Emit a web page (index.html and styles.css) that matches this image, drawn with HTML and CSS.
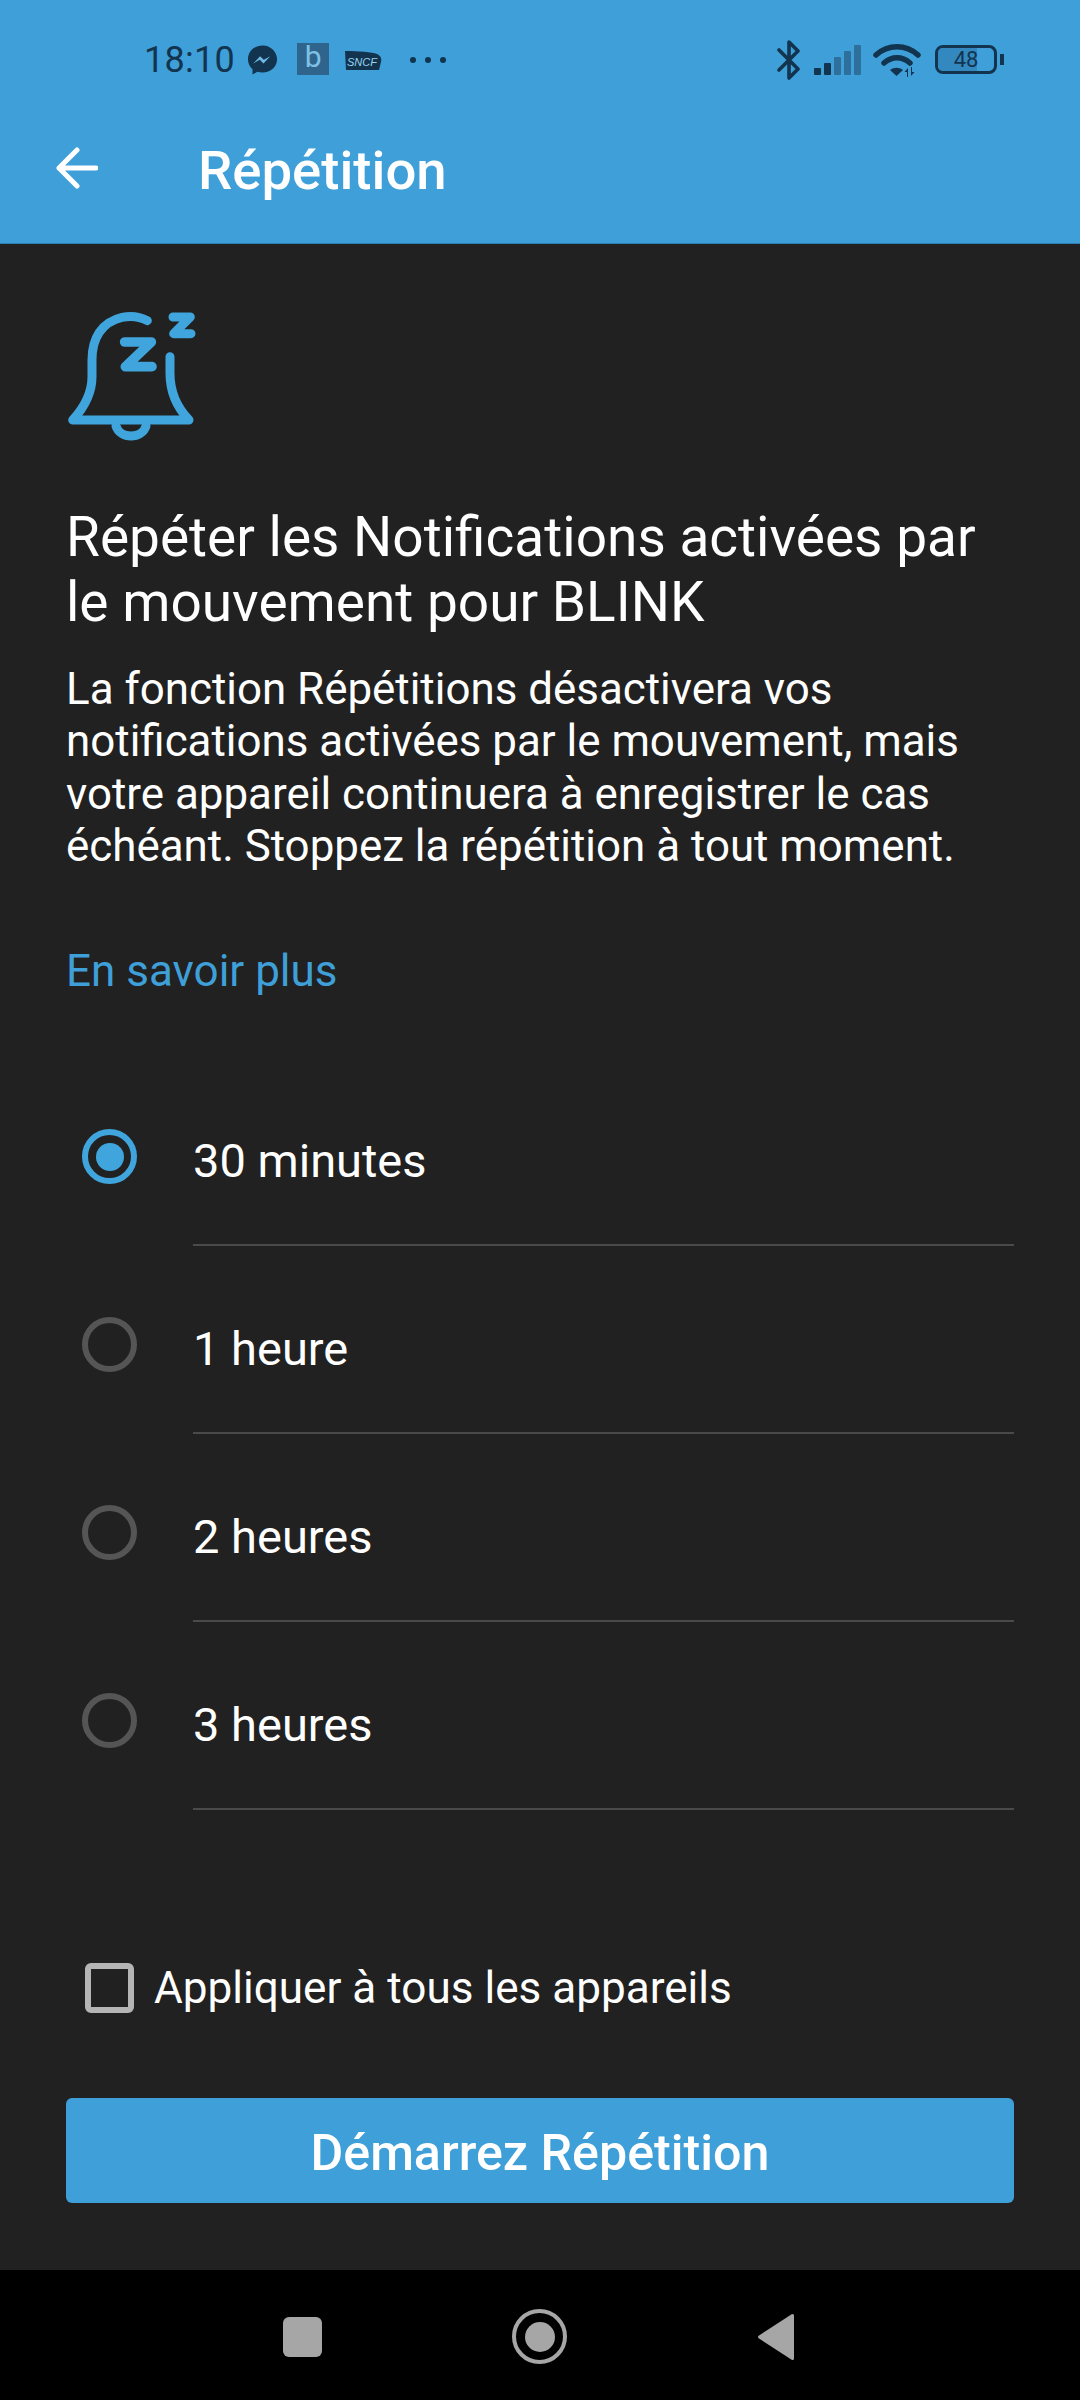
FILE: index.html
```html
<!DOCTYPE html>
<html lang="fr">
<head>
<meta charset="utf-8">
<title>Répétition</title>
<link rel="stylesheet" href="styles.css">
</head>
<body>
<div class="screen">
  <header class="header">
    <div class="status">
      <div class="status-left">
        <span class="time">18:10</span>
        <svg class="ic-msg" viewBox="0 0 32 32"><path class="dark" d="M16 1C7.500 1 1 7.200 1 15.200c0 4.200 1.800 7.800 4.700 10.300V31l5-2.800c1.600.5 3.400.7 5.300.7 8.500 0 15-6.100 15-13.700S24.500 1 16 1z"/><path class="pale" d="M6.500 19.500l7-7.500 3.800 3.700 6.700-3.700-7 7.500-3.800-3.700z"/></svg>
        <span class="ic-b">b</span>
        <svg class="ic-sncf" viewBox="0 0 38 21"><path class="dark" d="M1 1c14 0 27 1 32 3 4 2 5 5 4 8l-2 8H2z"/><text x="3" y="16" class="sncf-t">SNCF</text></svg>
        <span class="dots"><i></i><i></i><i></i></span>
      </div>
      <div class="status-right">
        <svg class="ic-bt" viewBox="0 0 26 40"><path d="M3 10l19 19-9 9V2l9 9L3 30" fill="none" stroke="#12344f" stroke-width="3.600" stroke-linecap="round" stroke-linejoin="round"/></svg>
        <span class="signal"><i class="on s1"></i><i class="on s2"></i><i class="s3"></i><i class="s4"></i><i class="s5"></i></span>
        <svg class="ic-wifi" viewBox="0 0 48 34"><g fill="none" stroke="#12344f" stroke-width="5.500" stroke-linecap="round"><path d="M3 11C15 0 33 0 45 11"/><path d="M11 19c8-7 18-7 26 0"/></g><path class="dark" d="M17 26c4-3 9-3 13 0l-6.500 6z"/><path class="dark" d="M34 33V28h-2.500l3.500-4 0 9zM39 23v5h2.500l-3.500 4 0-9z"/></svg>
        <div class="battery"><div class="battery-body"><div class="battery-fill"></div><span class="battery-text">48</span></div><i class="battery-tip"></i></div>
      </div>
    </div>
    <div class="appbar">
      <svg class="ic-back" viewBox="0 0 46 46"><path d="M44 23H7M25 5L7 23l18 18" fill="none" stroke="#fff" stroke-width="5" stroke-linecap="round" stroke-linejoin="round"/></svg>
      <h1 class="title">Répétition</h1>
    </div>
  </header>

  <main class="content">
    <svg class="ic-bell" viewBox="108 540 400 400" fill="none" stroke="#3fa5dc" stroke-width="27" stroke-linecap="round" stroke-linejoin="round">
      <path d="M352 572C330 560 300 557 276 562 215 576 186 625 186 690v50c0 50-26 95-58 130h349c-34-35-57-80-57-140v-50"/>
      <path d="M258 888c12 40 78 40 90 0"/>
      <path d="M284 636h80l-78 74h80" stroke-width="29"/>
      <path d="M429 561h52l-50 50h52" stroke-width="27"/>
    </svg>
    <h2 class="heading">Répéter les Notifications activées par le mouvement pour BLINK</h2>
    <p class="body">La fonction Répétitions désactivera vos notifications activées par le mouvement, mais votre appareil continuera à enregistrer le cas échéant. Stoppez la répétition à tout moment.</p>
    <a class="more">En savoir plus</a>

    <ul class="options">
      <li class="option"><span class="radio checked"></span><span class="opt-label">30 minutes</span></li>
      <li class="option"><span class="radio"></span><span class="opt-label">1 heure</span></li>
      <li class="option"><span class="radio"></span><span class="opt-label">2 heures</span></li>
      <li class="option"><span class="radio"></span><span class="opt-label">3 heures</span></li>
    </ul>

    <div class="apply"><span class="checkbox"></span><span class="apply-label">Appliquer à tous les appareils</span></div>
    <button class="cta">Démarrez Répétition</button>
  </main>

  <nav class="nav">
    <i class="nav-square"></i>
    <i class="nav-home"></i>
    <svg class="nav-back" viewBox="0 0 38 48"><path d="M35.500 2.500v43L2.500 24z" fill="#a6a6a6" stroke="#a6a6a6" stroke-width="3" stroke-linejoin="round"/></svg>
  </nav>
</div>
</body>
</html>
```
FILE: styles.css
```css
* { box-sizing: border-box; }
html, body { margin: 0; padding: 0; }
body { width: 1080px; height: 2400px; background: #212121; font-family: Roboto, "Liberation Sans", sans-serif; color: #fff; overflow: hidden; }
.screen { width: 1080px; height: 2400px; display: flex; flex-direction: column; }
.dark { fill: #12344f; }
.pale { fill: #6fb8e4; }

.header { height: 244px; background: #3f9fd8; flex: none; border-bottom: 1px solid #2c7fb2; }
.status { height: 120px; padding: 40px 76px 0 144px; display: flex; justify-content: space-between; align-items: flex-start; }
.status-left { display: flex; align-items: center; height: 40px; }
.time { font-size: 36px; color: #12344f; line-height: 40px; letter-spacing: .3px; }
.ic-msg { width: 31px; height: 32px; margin-left: 12px; }
.ic-b { width: 32px; height: 32px; margin-left: 19px; margin-top: -2px; background: #2f658c; color: #7fc0e6; font-size: 30px; line-height: 28px; text-align: center; }
.ic-sncf { width: 38px; height: 21px; margin-left: 15px; }
.sncf-t { font-family: "Liberation Sans", sans-serif; font-size: 11px; font-style: italic; fill: #9ad4f2; }
.dots { display: flex; gap: 9px; margin-left: 28px; }
.dots i { width: 6px; height: 6px; border-radius: 50%; background: #12344f; }

.status-right { display: flex; align-items: flex-start; height: 40px; }
.ic-bt { width: 26px; height: 40px; }
.signal { display: flex; align-items: flex-end; gap: 3px; margin: 4px 0 0 12px; height: 31px; }
.signal i { width: 7px; background: #2f6f9b; border-radius: 1px; }
.signal .on { background: #12344f; }
.s1 { height: 7px; } .s2 { height: 12px; } .s3 { height: 18px; } .s4 { height: 24px; } .s5 { height: 30px; }
.ic-wifi { width: 48px; height: 34px; margin: 4px 0 0 12px; }
.battery { display: flex; align-items: center; margin: 5px 0 0 14px; }
.battery-body { position: relative; width: 62px; height: 29px; border: 3px solid #12344f; border-radius: 8px; overflow: hidden; }
.battery-fill { width: 70%; height: 100%; background: #3488c0; }
.battery-text { position: absolute; inset: 0; text-align: center; font-size: 22px; line-height: 23px; color: #12344f; }
.battery-tip { width: 4px; height: 11px; background: #12344f; margin-left: 3px; }

.appbar { display: flex; align-items: center; height: 100px; padding-left: 52px; margin-top: -2px; }
.ic-back { width: 46px; height: 46px; }
.title { margin: 3px 0 0 100px; font-size: 54.500px; font-weight: 500; line-height: 60px; }

.content { flex: 1; padding: 66px 66px 0; display: flex; flex-direction: column; }
.ic-bell { width: 133.330px; height: 133.330px; flex: none; display: block; }
.heading { margin: 62px 0 0; font-size: 55px; font-weight: 400; line-height: 65px; }
.body { margin: 27.500px 0 0; font-size: 43.900px; line-height: 52.500px; }
.more { margin-top: 73px; font-size: 44px; line-height: 50px; color: #3f9fd8; }

.options { list-style: none; margin: 62.500px 0 0; padding: 0; }
.option { position: relative; height: 188px; padding: 0 0 0 127px; }
.opt-label { display: flex; align-items: center; height: 188px; padding-top: 18.500px; font-size: 47px; border-bottom: 2px solid #4a4a4a; }
.radio { position: absolute; left: 16px; top: 71px; width: 55px; height: 55px; border: 6px solid #555; border-radius: 50%; }
.radio.checked { border-color: #3fa5dc; }
.radio.checked::after { content: ""; position: absolute; left: 7.500px; top: 7.500px; width: 28px; height: 28px; border-radius: 50%; background: #3fa5dc; }

.apply { display: flex; align-items: center; margin: 152.500px 0 0 19px; height: 50px; }
.checkbox { width: 49px; height: 50px; border: 6px solid #b5b5b5; border-radius: 6px; flex: none; }
.apply-label { margin-left: 20px; font-size: 44.100px; }
.cta { margin-top: 85.500px; height: 105px; width: 948px; flex: none; border: 0; border-radius: 6px; background: #3f9fd8; color: #fff; font-family: inherit; font-size: 50.200px; font-weight: 500; padding: 3px 0 0; }

.nav { flex: none; height: 130px; background: #000; display: flex; align-items: center; padding: 3px 0 0 283px; }
.nav-square { width: 39px; height: 40px; background: #a6a6a6; border-radius: 6px; }
.nav-home { position: relative; width: 55px; height: 55px; border: 4px solid #a6a6a6; border-radius: 50%; margin-left: 190px; }
.nav-home::after { content: ""; position: absolute; left: 8.500px; top: 8.500px; width: 30px; height: 30px; background: #a6a6a6; border-radius: 50%; }
.nav-back { width: 38px; height: 48px; margin-left: 190px; }
```
